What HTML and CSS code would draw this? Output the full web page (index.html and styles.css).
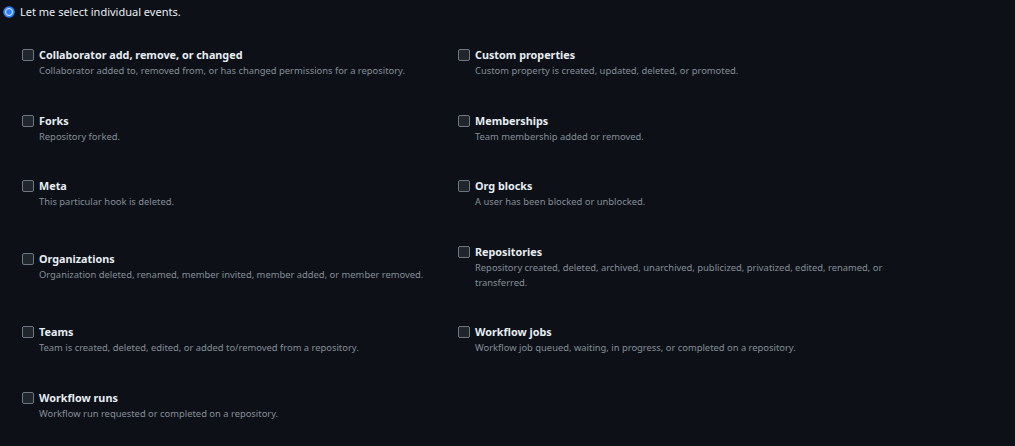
FILE: index.html
```html
<!DOCTYPE html>
<html>
<head>
<meta charset="utf-8">
<link rel="stylesheet" href="styles.css">
</head>
<body>
<div class="page">
  <label class="radio-row">
    <svg class="radio" width="12" height="12" viewBox="0 0 12 12"><circle cx="6" cy="6" r="5.8" fill="#2f81f7"/><circle cx="6" cy="6" r="3.5" fill="#2f81f7" stroke="#e6edf3" stroke-width="1"/></svg>
    <span>Let me select individual events.</span>
  </label>
  <div class="events">
    <div class="event"><span class="cb"></span><div class="txt"><div class="title">Collaborator add, remove, or changed</div><div class="desc">Collaborator added to, removed from, or has changed permissions for a repository.</div></div></div>
    <div class="event"><span class="cb"></span><div class="txt"><div class="title">Custom properties</div><div class="desc">Custom property is created, updated, deleted, or promoted.</div></div></div>
    <div class="event"><span class="cb"></span><div class="txt"><div class="title">Forks</div><div class="desc">Repository forked.</div></div></div>
    <div class="event"><span class="cb"></span><div class="txt"><div class="title">Memberships</div><div class="desc">Team membership added or removed.</div></div></div>
    <div class="event"><span class="cb"></span><div class="txt"><div class="title">Meta</div><div class="desc">This particular hook is deleted.</div></div></div>
    <div class="event"><span class="cb"></span><div class="txt"><div class="title">Org blocks</div><div class="desc">A user has been blocked or unblocked.</div></div></div>
    <div class="event"><span class="cb"></span><div class="txt"><div class="title">Organizations</div><div class="desc">Organization deleted, renamed, member invited, member added, or member removed.</div></div></div>
    <div class="event"><span class="cb"></span><div class="txt"><div class="title">Repositories</div><div class="desc">Repository created, deleted, archived, unarchived, publicized, privatized, edited, renamed, or transferred.</div></div></div>
    <div class="event"><span class="cb"></span><div class="txt"><div class="title">Teams</div><div class="desc">Team is created, deleted, edited, or added to/removed from a repository.</div></div></div>
    <div class="event"><span class="cb"></span><div class="txt"><div class="title">Workflow jobs</div><div class="desc">Workflow job queued, waiting, in progress, or completed on a repository.</div></div></div>
    <div class="event"><span class="cb"></span><div class="txt"><div class="title">Workflow runs</div><div class="desc">Workflow run requested or completed on a repository.</div></div></div>
  </div>
</div>
</body>
</html>
```
FILE: styles.css
```css
html, body {
  margin: 0;
  padding: 0;
  background: #0d1117;
  height: 100%;
}
body {
  font-family: "Noto Sans", "Open Sans", sans-serif;
  color: #e6edf3;
}
.page {
  padding: 4px 0 0 3px;
}
.radio-row {
  display: flex;
  align-items: center;
  gap: 5px;
  font-size: 11px;
  line-height: 16px;
}
.radio {
  display: block;
  flex: none;
}
.events {
  display: grid;
  grid-template-columns: 436px 435px;
  row-gap: 34.5px;
  align-items: center;
  margin: 27px 0 0 19px;
}
.event {
  display: flex;
  align-items: flex-start;
  gap: 5px;
}
.cb {
  flex: none;
  width: 10px;
  height: 10px;
  margin-top: 2px;
  border: 1px solid #6e7681;
  border-radius: 2px;
  background: #21262d;
}
.txt {
  max-width: 418px;
}
.title {
  font-size: 10.8px;
  font-weight: 700;
  line-height: 16px;
  color: #e6edf3;
}
.desc {
  font-size: 9.4px;
  line-height: 15px;
  color: #848d97;
}
```
